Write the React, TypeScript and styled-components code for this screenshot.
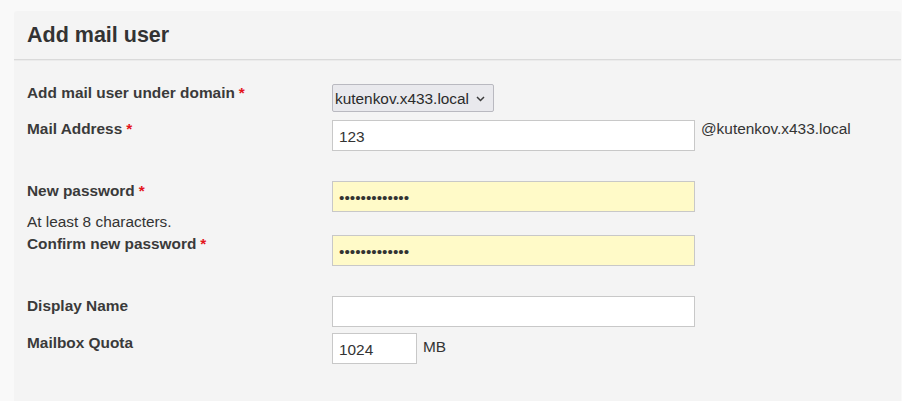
import React from "react";
import styled, { createGlobalStyle } from "styled-components";

const GlobalStyle = createGlobalStyle`
  html, body {
    margin: 0;
    padding: 0;
    background: #f9f9f9;
    font-family: "Liberation Sans", Arial, sans-serif;
    color: #333;
  }
  * { box-sizing: border-box; }
`;

const Panel = styled.section`
  margin: 11px 1px 0 14px;
  min-height: 390px;
  background: #f4f4f4;
  border-radius: 3px 3px 0 0;
`;

const PanelHeader = styled.header`
  height: 49px;
  display: flex;
  align-items: center;
  padding: 0 13px;
  border-bottom: 1px solid #dadada;
  box-shadow: 0 1px 0 #ebebeb;
`;

const Title = styled.h2`
  margin: 0;
  font-size: 21.5px;
  font-weight: bold;
  color: #333;
  line-height: 24px;
`;

const Form = styled.form`
  padding: 24px 13px 0;
`;

const Row = styled.div<{ $mt?: number }>`
  display: flex;
  align-items: flex-start;
  margin-top: ${(p) => p.$mt ?? 0}px;
`;

const LabelCol = styled.div`
  flex: none;
  width: 305px;
`;

const Label = styled.label<{ $pt?: number }>`
  display: block;
  padding-top: ${(p) => p.$pt ?? 0}px;
  font-size: 15.4px;
  line-height: 18px;
  font-weight: bold;
  color: #3a3a3a;
`;

const Required = styled.span`
  color: #e4141c;
  margin-left: 4px;
`;

const Hint = styled.div`
  margin-top: 13px;
  font-size: 15.4px;
  line-height: 18px;
  color: #333;
`;

const FieldCol = styled.div`
  display: flex;
  align-items: flex-start;
  gap: 6px;
`;

const TextInput = styled.input<{ $w: number; $bg?: string }>`
  width: ${(p) => p.$w}px;
  height: 31px;
  margin: 0;
  padding: 2px 6px 0;
  border: 1px solid #c8c8c8;
  border-radius: 0;
  background: ${(p) => p.$bg ?? "#ffffff"};
  font-family: "Liberation Sans", Arial, sans-serif;
  font-size: 15.4px;
  color: #333;
  outline: none;
`;

const SelectWrap = styled.div`
  position: relative;
  width: 162px;
  height: 28px;
`;

const Select = styled.select`
  appearance: none;
  -webkit-appearance: none;
  width: 100%;
  height: 100%;
  margin: 0;
  padding: 0 22px 0 2px;
  border: 1px solid #b9b9c0;
  border-radius: 2px;
  background: #e9e9ed;
  font-family: "Liberation Sans", Arial, sans-serif;
  font-size: 15.4px;
  color: #2b2b2b;
  outline: none;
`;

const Chevron = styled.svg`
  position: absolute;
  right: 9px;
  top: 12px;
  pointer-events: none;
`;

const Suffix = styled.span<{ $pt?: number }>`
  padding-top: ${(p) => p.$pt ?? 0}px;
  font-size: 15.4px;
  line-height: 18px;
  color: #333;
`;

export default function App() {
  return (
    <>
      <GlobalStyle />
      <Panel>
        <PanelHeader>
          <Title>Add mail user</Title>
        </PanelHeader>
        <Form onSubmit={(e) => e.preventDefault()}>
          <Row>
            <LabelCol>
              <Label>
                Add mail user under domain<Required>*</Required>
              </Label>
            </LabelCol>
            <FieldCol>
              <SelectWrap>
                <Select defaultValue="kutenkov.x433.local">
                  <option value="kutenkov.x433.local">kutenkov.x433.local</option>
                </Select>
                <Chevron width="9" height="6" viewBox="0 0 9 6">
                  <path d="M1 1l3.5 3.5L8 1" fill="none" stroke="#3c3c3c" strokeWidth="1.5" />
                </Chevron>
              </SelectWrap>
            </FieldCol>
          </Row>

          <Row $mt={8}>
            <LabelCol>
              <Label>
                Mail Address<Required>*</Required>
              </Label>
            </LabelCol>
            <FieldCol>
              <TextInput $w={363} type="text" defaultValue="123" />
              <Suffix>@kutenkov.x433.local</Suffix>
            </FieldCol>
          </Row>

          <Row $mt={30}>
            <LabelCol>
              <Label $pt={1}>
                New password<Required>*</Required>
              </Label>
              <Hint>At least 8 characters.</Hint>
            </LabelCol>
            <FieldCol>
              <TextInput $w={363} $bg="#fffac8" type="password" defaultValue="1234567890123" />
            </FieldCol>
          </Row>

          <Row $mt={4}>
            <LabelCol>
              <Label>
                Confirm new password<Required>*</Required>
              </Label>
            </LabelCol>
            <FieldCol>
              <TextInput $w={363} $bg="#fffac8" type="password" defaultValue="1234567890123" />
            </FieldCol>
          </Row>

          <Row $mt={30}>
            <LabelCol>
              <Label $pt={1}>Display Name</Label>
            </LabelCol>
            <FieldCol>
              <TextInput $w={363} type="text" defaultValue="" />
            </FieldCol>
          </Row>

          <Row $mt={6}>
            <LabelCol>
              <Label $pt={1}>Mailbox Quota</Label>
            </LabelCol>
            <FieldCol>
              <TextInput $w={85} type="text" defaultValue="1024" />
              <Suffix $pt={5}>MB</Suffix>
            </FieldCol>
          </Row>
        </Form>
      </Panel>
    </>
  );
}
